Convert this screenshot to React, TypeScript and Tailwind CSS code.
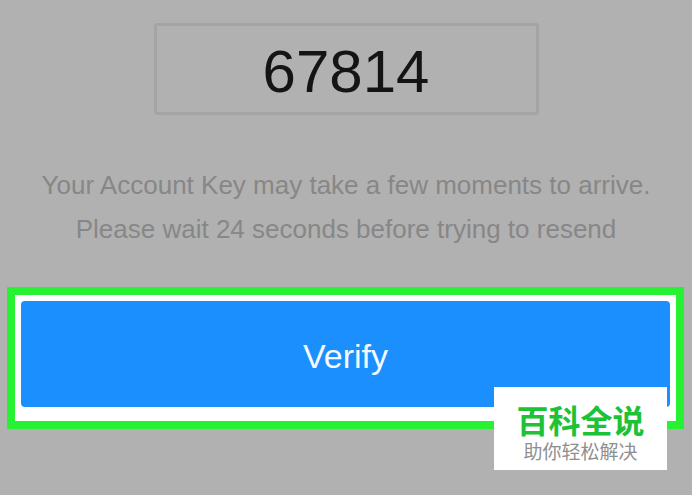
export default function App() {
  return (
    <div className="relative w-[692px] h-[495px] overflow-hidden bg-[#b1b1b1] font-['Liberation_Sans',Arial,sans-serif]">
      <div className="pt-[23px] flex flex-col items-center">
        <div className="w-[385px] h-[92px] border-[3px] border-[#a4a4a4] rounded-[3px] pt-[6px] flex items-center justify-center text-[60px] leading-none text-[#141414]">
          67814
        </div>
      </div>
      <div className="mt-[48px] text-center text-[26px] leading-[44px] text-[#878787]">
        <p>Your Account Key may take a few moments to arrive.</p>
        <p>Please wait 24 seconds before trying to resend</p>
      </div>
      <div className="mt-[36px] ml-[7px] w-[677px] border-[8px] border-[#26f132] bg-white pt-[6px] px-[6px] pb-[14px]">
        <div className="h-[106px] rounded-[4px] bg-[#1a8ffd] pt-[3px] flex items-center justify-center text-[34px] leading-none text-[#f4faff]">
          Verify
        </div>
      </div>
      <div className="absolute left-[494px] top-[387px] w-[173px] h-[83px] bg-white flex flex-col items-center pt-[15px] font-['Noto_Sans_CJK_SC',sans-serif]">
        <div className="text-[32px] leading-[34px] font-bold text-[#1dc236]">百科全说</div>
        <div className="mt-[5px] text-[19px] leading-[20px] text-[#8f8f8f]">助你轻松解决</div>
      </div>
    </div>
  );
}
